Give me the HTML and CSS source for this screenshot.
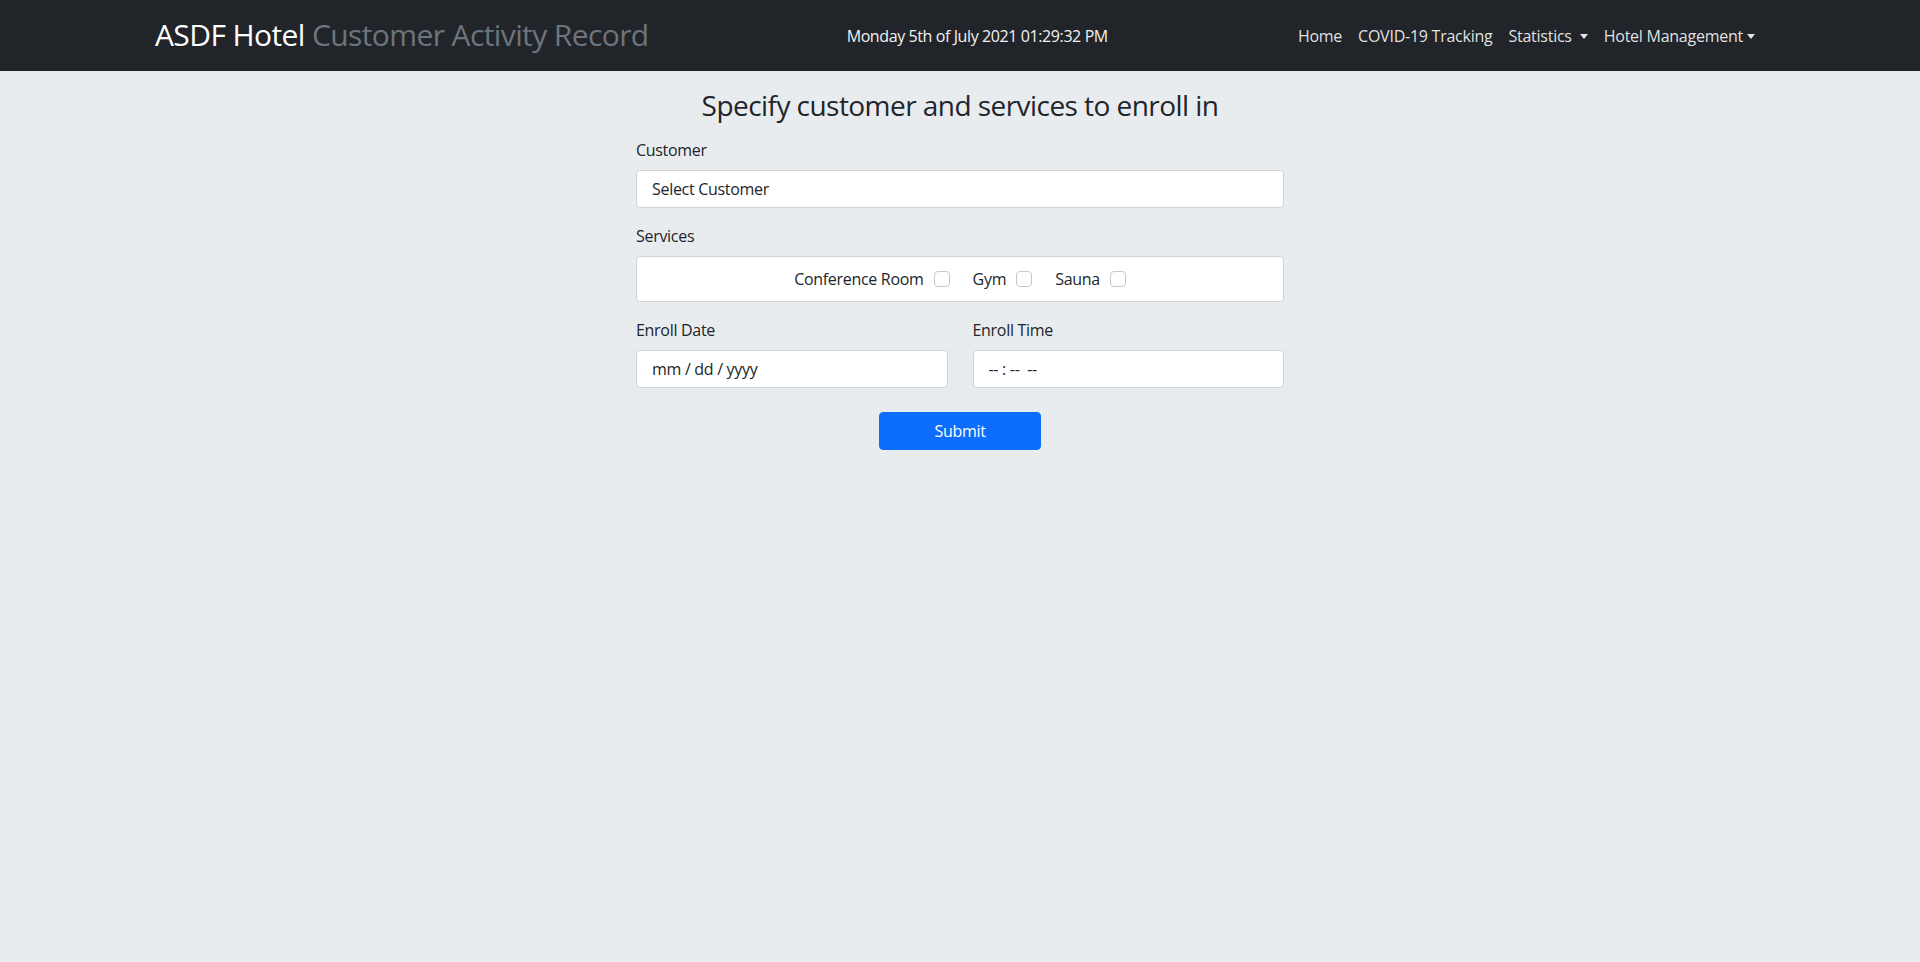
FILE: index.html
```html
<!DOCTYPE html>
<html lang="en">
<head>
<meta charset="utf-8">
<title>ASDF Hotel Customer Activity Record</title>
<link rel="stylesheet" href="styles.css">
</head>
<body>
<nav class="navbar">
  <div class="nav-inner">
    <a class="brand" href="#">ASDF Hotel <span class="brand-sub">Customer Activity Record</span></a>
    <div class="clock">Monday 5th of July 2021 01:29:32 PM</div>
    <ul class="nav-links">
      <li><a href="#">Home</a></li>
      <li><a href="#">COVID-19 Tracking</a></li>
      <li><a href="#" class="dropdown">Statistics</a></li>
      <li><a href="#" class="dropdown tight">Hotel Management</a></li>
    </ul>
  </div>
</nav>
<main class="page">
  <form class="enroll">
    <h3 class="title">Specify customer and services to enroll in</h3>
    <div class="field">
      <label class="label">Customer</label>
      <div class="control">Select Customer</div>
    </div>
    <div class="field">
      <label class="label">Services</label>
      <div class="control services">
        <label class="check">Conference Room <span class="box"></span></label>
        <label class="check">Gym <span class="box"></span></label>
        <label class="check">Sauna <span class="box"></span></label>
      </div>
    </div>
    <div class="row">
      <div class="field">
        <label class="label">Enroll Date</label>
        <div class="control">mm / dd / yyyy</div>
      </div>
      <div class="field">
        <label class="label">Enroll Time</label>
        <div class="control time">-- : --&nbsp;&nbsp;--</div>
      </div>
    </div>
    <div class="actions">
      <button type="button" class="btn">Submit</button>
    </div>
  </form>
</main>
</body>
</html>
```
FILE: styles.css
```css
* { box-sizing: border-box; }
html, body { margin: 0; padding: 0; }
body {
  font-family: "Open Sans", "Noto Sans", sans-serif;
  font-size: 16px;
  line-height: 1.5;
  letter-spacing: -0.3px;
  color: #212529;
  background: #e9ecef;
  min-height: 962px;
}
.navbar {
  background: #212529;
  height: 71px;
  padding: 0 165px 0 155px;
}
.nav-inner {
  height: 100%;
  display: flex;
  align-items: center;
  justify-content: space-between;
}
.brand {
  font-size: 30px;
  line-height: 1.2;
  letter-spacing: -0.6px;
  color: #fff;
  text-decoration: none;
  margin-top: -2px;
  margin-right: 16px;
  white-space: nowrap;
}
.brand-sub { color: #6c757d; }
.clock {
  color: #f2f2f2;
  font-size: 16px;
  letter-spacing: -0.4px;
  white-space: nowrap;
}
.nav-links {
  display: flex;
  list-style: none;
  margin: 0;
  padding: 0;
}
.nav-links a {
  display: block;
  padding: 8px 8px;
  color: rgba(255,255,255,.88);
  text-decoration: none;
  white-space: nowrap;
  letter-spacing: -0.25px;
}
.nav-links a.tight { padding-right: 0; }
.dropdown::after {
  content: "";
  display: inline-block;
  margin-left: 8px;
  vertical-align: 3px;
  border-top: 5px solid;
  border-left: 4.5px solid transparent;
  border-right: 4.5px solid transparent;
}
.dropdown.tight::after { margin-left: 4px; }
.page {
  display: flex;
  justify-content: center;
}
.enroll {
  width: 648px;
  padding-top: 18px;
}
.title {
  margin: 0 0 15px;
  font-size: 28px;
  font-weight: 400;
  line-height: 1.2;
  letter-spacing: -0.55px;
  text-align: center;
}
.field { margin-bottom: 16px; }
.label {
  display: block;
  margin-bottom: 8px;
}
.control {
  background: #fff;
  border: 1px solid #ced4da;
  border-radius: 4px;
  height: 38px;
  padding: 6px 15px;
  line-height: 24px;
}
.services {
  height: 46px;
  display: flex;
  justify-content: center;
  align-items: center;
  gap: 23px;
  padding: 0 12px;
}
.check {
  display: flex;
  align-items: center;
  gap: 10px;
}
.box {
  width: 16px;
  height: 16px;
  border: 1px solid #c4c8cc;
  border-radius: 4px;
  background: #fff;
}
.row {
  display: grid;
  grid-template-columns: 1fr 1fr;
  column-gap: 25px;
}
.row .field { margin-bottom: 24px; }
.actions {
  display: flex;
  justify-content: center;
}
.btn {
  width: 162px;
  height: 38px;
  background: #0d6efd;
  color: #fff;
  border: 1px solid #0d6efd;
  border-radius: 4px;
  font-family: inherit;
  font-size: 16px;
  line-height: 24px;
  letter-spacing: -0.3px;
  padding: 6px 12px;
}
```
